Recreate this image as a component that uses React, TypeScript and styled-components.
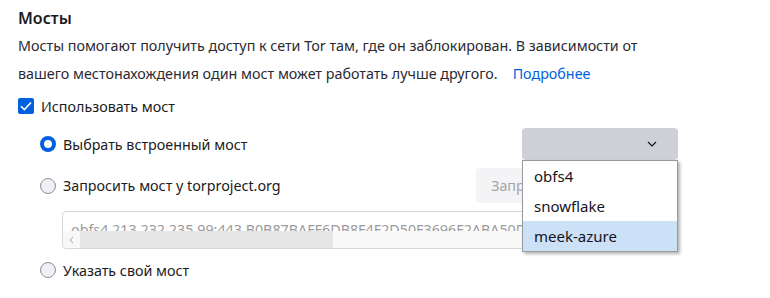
import React from "react";
import styled, { createGlobalStyle } from "styled-components";

// Global
const GlobalStyle = createGlobalStyle`
  body {
    margin: 0;
    background: #ffffff;
    color: #1c1b22;
    font-family: "Noto Sans", "Open Sans", sans-serif;
    font-size: 14.3px;
    overflow: hidden;
  }
`;

// Styled Components
const Page = styled.div`
  width: 660px;
  padding: 4px 0 0 18px;
`;

const Heading = styled.h2`
  margin: 0;
  font-size: 16px;
  font-weight: 600;
  line-height: 28px;
`;

const Description = styled.p`
  margin: 0;
  line-height: 28px;
  color: #2b2a33;
`;

const LearnMore = styled.a`
  margin-left: 15px;
  color: #0061e0;
  text-decoration: none;
`;

const CheckRow = styled.label`
  display: flex;
  align-items: center;
  gap: 7px;
  height: 24px;
  margin-top: 6px;
`;

const CheckBox = styled.span`
  display: flex;
  align-items: center;
  justify-content: center;
  width: 16px;
  height: 16px;
  border-radius: 2px;
  background: #0061e0;
`;

const Options = styled.div`
  display: flex;
  flex-direction: column;
  gap: 8px;
  margin-top: 10px;
  padding-left: 22px;
`;

const OptionRow = styled.div<{ $inset?: number }>`
  display: flex;
  align-items: center;
  justify-content: space-between;
  min-height: 26px;
  padding-right: ${(props) => props.$inset ?? 0}px;
`;

const RadioLabel = styled.label`
  display: flex;
  align-items: center;
  gap: 7px;
`;

const Radio = styled.span<{ $checked?: boolean }>`
  box-sizing: border-box;
  width: 16px;
  height: 16px;
  border-radius: 50%;
  background: ${(props) => (props.$checked ? "#ffffff" : "#f0f0f4")};
  border: ${(props) =>
    props.$checked ? "4px solid #0061e0" : "1px solid #8f8f9d"};
`;

const SelectWrap = styled.div`
  position: relative;
  width: 156px;
`;

const SelectButton = styled.div`
  display: flex;
  align-items: center;
  justify-content: flex-end;
  height: 32px;
  padding-right: 21px;
  border-radius: 4px;
  background: #cfcfd8;
`;

const Popup = styled.div`
  position: absolute;
  top: 100%;
  left: 0;
  right: 0;
  z-index: 10;
  background: #ffffff;
  border: 1px solid #9a9a9a;
  box-shadow: 2px 2px 3px rgba(0, 0, 0, 0.3);
`;

const PopupOption = styled.div<{ $active?: boolean }>`
  height: 30px;
  line-height: 30px;
  padding: 0 11px;
  font-size: 15px;
  color: #15141a;
  background: ${(props) => (props.$active ? "#cce0f7" : "transparent")};
`;

const RequestButton = styled.button`
  height: 35px;
  padding: 0 15px;
  border: none;
  border-radius: 4px;
  background: #f4f4f6;
  color: #a4a4a8;
  font-family: inherit;
  font-size: 14.3px;
`;

const BridgeBox = styled.div`
  position: relative;
  height: 36px;
  margin: 0 16px 0 22px;
  overflow: hidden;
  border: 1px solid #d7d7de;
  border-radius: 4px;
  background: #ffffff;
`;

const BridgeText = styled.div`
  padding: 8px 8px 0;
  white-space: nowrap;
  color: #9b9b9b;
  line-height: 20px;
`;

const ScrollBar = styled.div`
  position: absolute;
  left: 0;
  right: 0;
  bottom: 0;
  display: flex;
  height: 17px;
  background: #f8f8f8;
`;

const ScrollArrow = styled.div`
  display: flex;
  align-items: center;
  justify-content: center;
  width: 17px;
`;

const ScrollThumb = styled.div`
  width: 253px;
  background: #e6e6e6;
`;

const Hint = styled.div`
  margin-top: 1.5px;
  padding-left: 22px;
  line-height: 20px;
`;

const Chevron = () => (
  <svg width="10" height="6" viewBox="0 0 10 6">
    <path d="M1 1l4 4 4-4" fill="none" stroke="#15141a" strokeWidth="1.2" />
  </svg>
);

const BRIDGE =
  "obfs4 213.232.235.99:443 B0B87BAFF6DB8F4F2D50F3696F2ABA50D7A1A6E3 cert=";

export default function App() {
  return (
    <>
      <GlobalStyle />
      <Page>
        <Heading>Мосты</Heading>
        <Description>
          Мосты помогают получить доступ к сети Tor там, где он заблокирован. В
          зависимости от вашего местонахождения один мост может работать лучше
          другого.
          <LearnMore href="#">Подробнее</LearnMore>
        </Description>

        <CheckRow>
          <CheckBox>
            <svg width="12" height="10" viewBox="0 0 12 10">
              <path
                d="M1 5.2l3.4 3.3L11 1.5"
                fill="none"
                stroke="#ffffff"
                strokeWidth="1.6"
              />
            </svg>
          </CheckBox>
          Использовать мост
        </CheckRow>

        <Options>
          <OptionRow>
            <RadioLabel>
              <Radio $checked />
              Выбрать встроенный мост
            </RadioLabel>
            <SelectWrap>
              <SelectButton>
                <Chevron />
              </SelectButton>
              <Popup>
                <PopupOption>obfs4</PopupOption>
                <PopupOption>snowflake</PopupOption>
                <PopupOption $active>meek-azure</PopupOption>
              </Popup>
            </SelectWrap>
          </OptionRow>

          <OptionRow $inset={3}>
            <RadioLabel>
              <Radio />
              Запросить мост у torproject.org
            </RadioLabel>
            <RequestButton disabled>Запросить новый мост…</RequestButton>
          </OptionRow>

          <BridgeBox>
            <BridgeText>{BRIDGE}</BridgeText>
            <ScrollBar>
              <ScrollArrow>
                <svg width="5" height="8" viewBox="0 0 5 8">
                  <path
                    d="M4 1L1 4l3 3"
                    fill="none"
                    stroke="#a3a3a3"
                    strokeWidth="1"
                  />
                </svg>
              </ScrollArrow>
              <ScrollThumb />
            </ScrollBar>
          </BridgeBox>

          <OptionRow>
            <RadioLabel>
              <Radio />
              Указать свой мост
            </RadioLabel>
          </OptionRow>

          <Hint>Укажите данные моста из надёжного источника.</Hint>
        </Options>
      </Page>
    </>
  );
}
